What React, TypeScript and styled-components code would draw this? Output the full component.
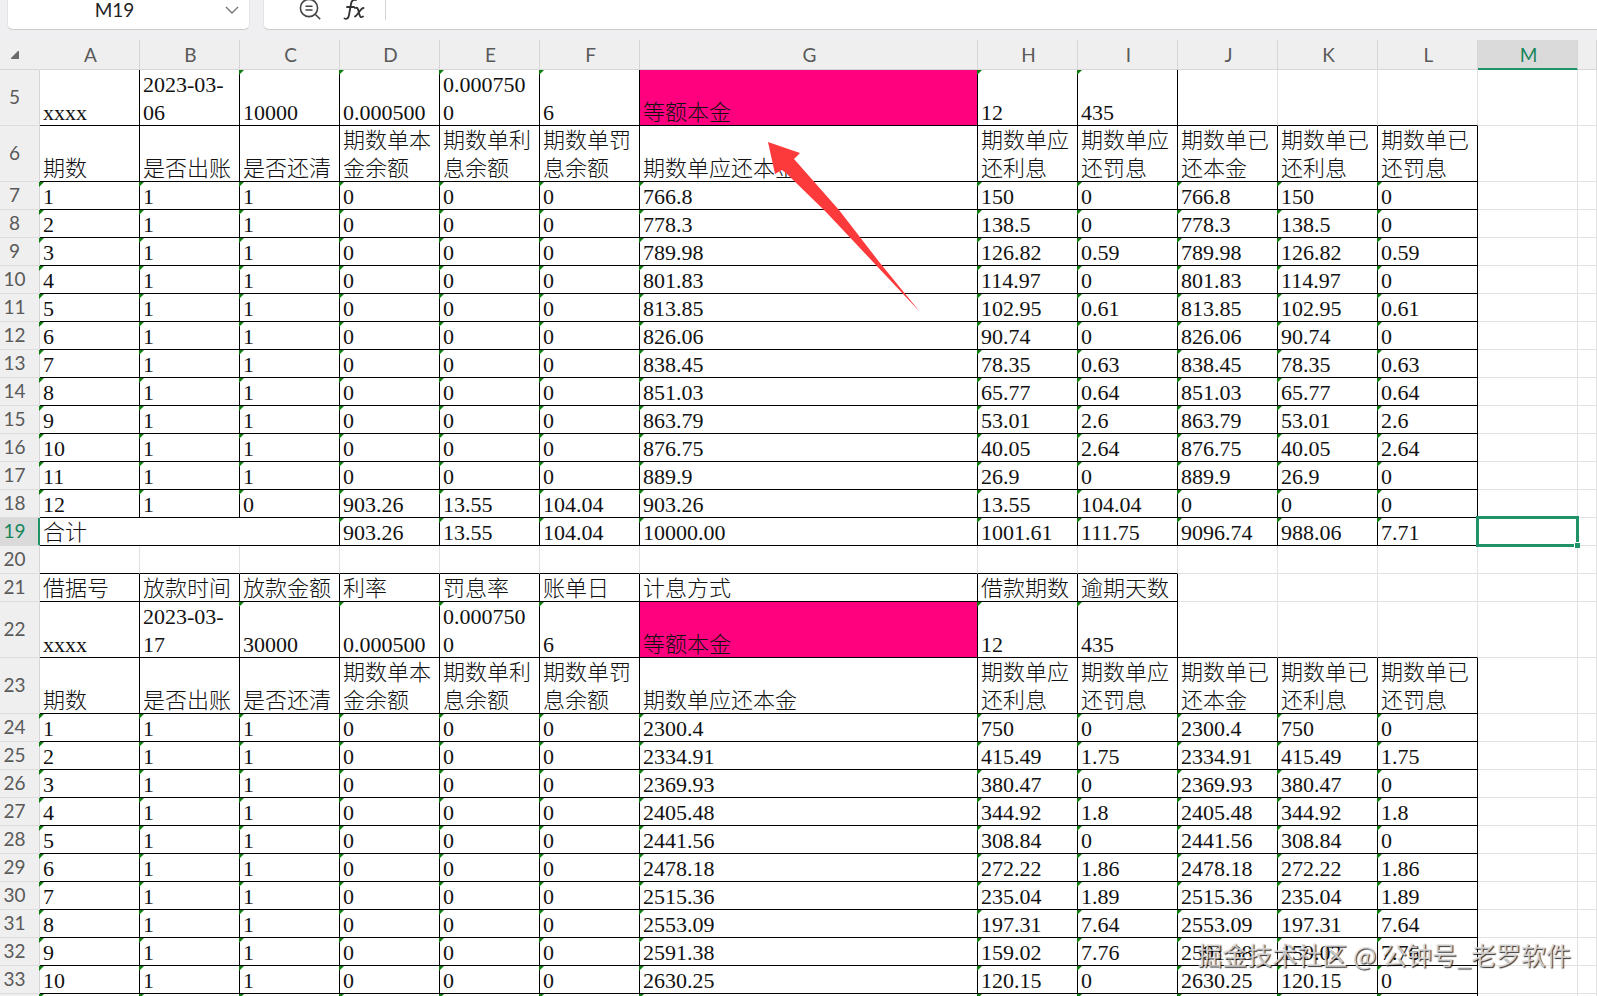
import React from 'react';
import styled, { createGlobalStyle, css } from 'styled-components';

const GlobalStyle = createGlobalStyle`
  *, *::before, *::after { box-sizing: border-box; }
  html, body { margin: 0; height: 100%; overflow: hidden; }
  body { background: #fff; }
`;

const uiFont = css`
  font-family: Lato, 'Noto Sans CJK SC', sans-serif;
  font-size: 19px;
`;

const Page = styled.main`
  position: relative;
  height: 100vh;
  overflow: hidden;
  background: #fff;
`;

const EditBar = styled.header`
  display: flex;
  gap: 13px;
  height: 40px;
  padding-left: 7px;
  padding-bottom: 10px;
  background: #efeff1;
`;

const barBox = css`
  display: flex;
  align-items: center;
  background: #fff;
  border: 1px solid #e3e3e3;
  border-top: 0;
  border-bottom-color: #c9cccc;
`;

const NameBox = styled.div`
  ${barBox}
  width: 243px;
  padding: 0 10px 10px 0;
  border-radius: 0 0 6px 6px;
`;

const NameInput = styled.input`
  ${uiFont}
  flex: 1;
  min-width: 0;
  height: 20px;
  padding: 0 4px 0 0;
  border: 0;
  outline: 0;
  background: transparent;
  color: #222;
  text-align: center;
`;

const FormulaBox = styled.div`
  ${barBox}
  flex: 1;
  gap: 20px;
  padding: 0 0 10px 35px;
  border-right: 0;
  border-radius: 0 0 0 6px;
`;

const IconButton = styled.button`
  display: flex;
  padding: 0;
  border: 0;
  background: none;
  color: #444;
`;

const FormulaInput = styled.input`
  ${uiFont}
  flex: 1;
  height: 20px;
  border: 0;
  border-left: 1px solid #d4d4d4;
  outline: 0;
  background: transparent;
`;

const Sheet = styled.table`
  width: 100%;
  table-layout: fixed;
  border-collapse: separate;
  border-spacing: 0;
`;

const Col = styled.col<{ $w?: number }>`
  width: ${(p) => (p.$w ? `${p.$w}px` : 'auto')};
`;

const headCell = css<{ $active?: boolean }>`
  ${uiFont}
  font-weight: 400;
  padding: 0;
  color: ${(p) => (p.$active ? '#17855c' : '#5a5a5a')};
  background: ${(p) => (p.$active ? '#dadada' : '#efefef')};
`;

const Corner = styled.th`
  ${headCell}
  height: 30px;
  border-bottom: 1px solid #d6d6d6;
  border-right: 1px solid #efefef;
  svg { display: block; margin-left: 10px; }
`;

const ColHead = styled.th<{ $active?: boolean }>`
  ${headCell}
  height: 30px;
  padding-left: 2px;
  line-height: 28px;
  border-right: 1px solid #d6d6d6;
  border-bottom: 1px solid #d6d6d6;
  ${(p) => p.$active && 'box-shadow: inset 0 -1px #1f9268; border-bottom-color: #1f9268;'}
`;

const RowHead = styled.th<{ $active?: boolean }>`
  ${headCell}
  padding-right: 10px;
  padding-bottom: 2px;
  line-height: 24px;
  border-right: 1px solid #d6d6d6;
  border-bottom: 1px solid #dcdcdc;
  ${(p) => p.$active && 'box-shadow: inset -1px 0 #1f9268; border-right-color: #1f9268;'}
`;

const Row = styled.tr<{ $tall?: boolean }>`
  height: ${(p) => (p.$tall ? 56 : 28)}px;
`;

const Cell = styled.td<{ $right?: boolean; $bottom?: boolean; $flag?: boolean; $pink?: boolean }>`
  position: relative;
  padding: 0 0 0 3px;
  vertical-align: bottom;
  background: ${(p) => (p.$pink ? '#ff007f' : '#fff')};
  border-right: 1px solid ${(p) => (p.$right ? '#000' : '#e2e2e2')};
  border-bottom: 1px solid ${(p) => (p.$bottom ? '#000' : '#e2e2e2')};
  ${(p) => p.$flag && css`
    &::before {
      content: '';
      position: absolute;
      top: 0;
      left: -1px;
      width: 5px;
      height: 5px;
      background: #0d7d0d;
      clip-path: polygon(0 0, 100% 0, 0 100%);
    }
  `}
`;

const CellText = styled.div`
  margin-bottom: -2px;
  font-family: 'Liberation Serif', 'Noto Sans CJK SC', serif;
  font-weight: 300;
  font-size: 22px;
  line-height: 28px;
  white-space: pre;
  color: #111;
`;

const Selection = styled.div`
  position: absolute;
  inset: -2px;
  border: 3px solid #1f9268;
  z-index: 1;
  &::after {
    content: '';
    position: absolute;
    right: -4px;
    bottom: -4px;
    width: 6px;
    height: 6px;
    background: #1f9268;
    border-top: 1px solid #fff;
    border-left: 1px solid #fff;
  }
`;

const Arrow = styled.svg`
  position: absolute;
  left: 760px;
  top: 136px;
  z-index: 2;
`;

const Watermark = styled.div`
  position: absolute;
  right: 26px;
  bottom: 24px;
  z-index: 2;
  font-family: 'Noto Sans CJK SC', sans-serif;
  font-size: 25px;
  line-height: 36px;
  white-space: nowrap;
  color: rgba(225, 222, 220, 0.85);
  text-shadow: 1px 1px 1px rgba(0, 0, 0, 0.8);
`;

type Kind = 'titles' | 'loan' | 'heads' | 'data' | 'total' | 'blank';
interface SheetRow { n: number; kind: Kind; cells: string[] }

const TITLES = ['借据号', '放款时间', '放款金额', '利率', '罚息率', '账单日', '计息方式', '借款期数', '逾期天数'];
const HEADS = [
  '期数', '是否出账', '是否还清', '期数单本\n金余额', '期数单利\n息余额', '期数单罚\n息余额', '期数单应还本金',
  '期数单应\n还利息', '期数单应\n还罚息', '期数单已\n还本金', '期数单已\n还利息', '期数单已\n还罚息',
];
const loan = (day: string, amount: string) => [
  'xxxx', `2023-03-\n${day}`, amount, '0.000500', '0.000750\n0', '6', '等额本金', '12', '435',
];
const paid = (i: number, capital: string, interest: string, penalty: string) => [
  String(i), '1', '1', '0', '0', '0', capital, interest, penalty, capital, interest, penalty,
];

const FIRST = [
  ['766.8', '150', '0'], ['778.3', '138.5', '0'], ['789.98', '126.82', '0.59'], ['801.83', '114.97', '0'],
  ['813.85', '102.95', '0.61'], ['826.06', '90.74', '0'], ['838.45', '78.35', '0.63'], ['851.03', '65.77', '0.64'],
  ['863.79', '53.01', '2.6'], ['876.75', '40.05', '2.64'], ['889.9', '26.9', '0'],
];
const SECOND = [
  ['2300.4', '750', '0'], ['2334.91', '415.49', '1.75'], ['2369.93', '380.47', '0'], ['2405.48', '344.92', '1.8'],
  ['2441.56', '308.84', '0'], ['2478.18', '272.22', '1.86'], ['2515.36', '235.04', '1.89'],
  ['2553.09', '197.31', '7.64'], ['2591.38', '159.02', '7.76'], ['2630.25', '120.15', '0'], ['2669.7', '80.7', '0'],
];

const rows: SheetRow[] = [
  { n: 5, kind: 'loan', cells: loan('06', '10000') },
  { n: 6, kind: 'heads', cells: HEADS },
  ...FIRST.map(([a, b, c], i) => ({ n: 7 + i, kind: 'data' as Kind, cells: paid(i + 1, a, b, c) })),
  { n: 18, kind: 'data', cells: ['12', '1', '0', '903.26', '13.55', '104.04', '903.26', '13.55', '104.04', '0', '0', '0'] },
  { n: 19, kind: 'total', cells: ['合计', '', '', '903.26', '13.55', '104.04', '10000.00', '1001.61', '111.75', '9096.74', '988.06', '7.71'] },
  { n: 20, kind: 'blank', cells: [] },
  { n: 21, kind: 'titles', cells: TITLES },
  { n: 22, kind: 'loan', cells: loan('17', '30000') },
  { n: 23, kind: 'heads', cells: HEADS },
  ...SECOND.map(([a, b, c], i) => ({ n: 24 + i, kind: 'data' as Kind, cells: paid(i + 1, a, b, c) })),
];

const LETTERS = 'ABCDEFGHIJKLM'.split('');

// how many columns have a dark right edge and a dark bottom edge
const DARK_EDGES: Record<Kind, [number, number]> = {
  titles: [9, 9],
  loan: [9, 12],
  heads: [12, 12],
  data: [12, 12],
  total: [12, 12],
  blank: [0, 9],
};

// cells that hold a number stored as text carry a green corner
const hasFlag = (kind: Kind, c: number) => {
  if (c > 11) return false;
  if (kind === 'data') return true;
  if (kind === 'total') return c > 2;
  return kind === 'loan' && c > 1 && c < 9 && c !== 6;
};

function SheetLine({ row }: { row: SheetRow }) {
  const [dark, base] = DARK_EDGES[row.kind];
  const active = row.n === 19;
  return (
    <Row $tall={row.kind === 'loan' || row.kind === 'heads'}>
      <RowHead scope="row" $active={active}>{row.n}</RowHead>
      {[...LETTERS, ''].map((_, c) => {
        if (row.kind === 'total' && (c === 1 || c === 2)) return null;
        return (
          <Cell
            key={c}
            colSpan={row.kind === 'total' && c === 0 ? 3 : 1}
            $right={c < dark}
            $bottom={c < base}
            $flag={hasFlag(row.kind, c)}
            $pink={row.kind === 'loan' && c === 6}
          >
            {row.cells[c] && <CellText>{row.cells[c]}</CellText>}
            {active && c === 12 && <Selection />}
          </Cell>
        );
      })}
    </Row>
  );
}

export default function App() {
  return (
    <Page>
      <GlobalStyle />
      <EditBar>
        <NameBox>
          <NameInput aria-label="Name box" defaultValue="M19" />
          <IconButton aria-label="Show names">
            <svg width="14" height="8" viewBox="0 0 14 8" fill="none" stroke="#777" strokeWidth="1.4">
              <path d="M1 1l6 6 6-6" />
            </svg>
          </IconButton>
        </NameBox>
        <FormulaBox>
          <IconButton aria-label="Zoom">
            <svg width="24" height="22" viewBox="0 0 24 22" fill="none" stroke="currentColor" strokeWidth="1.6">
              <circle cx="10" cy="9" r="8.6" />
              <path d="M16.200 15.2l5 5M6.5 7.2h7M6.5 11h7" />
            </svg>
          </IconButton>
          <IconButton aria-label="Insert function">
            <svg width="22" height="24" viewBox="0 0 22 24" fill="none" stroke="#333" strokeWidth="1.8" strokeLinecap="round">
              <path d="M13 2c-3-1-4.500 1-5 4l-2 11c-.5 3-2 4.500-4.500 3.500M4 9h7M12 10c3-1 3 1 4 5s1.500 5 4 3.500M20.500 10c-3 0-6 8-8.500 8.500" />
            </svg>
          </IconButton>
          <FormulaInput aria-label="Formula" />
        </FormulaBox>
      </EditBar>
      <Sheet>
        <colgroup>
          <Col $w={40} />
          {LETTERS.map((l) => <Col key={l} $w={l === 'G' ? 338 : 100} />)}
          <Col />
        </colgroup>
        <thead>
          <tr>
            <Corner aria-label="Select all">
              <svg width="10" height="10" viewBox="0 0 10 10"><path d="M9 1v8H1V8l7-7z" fill="#6a6a6a" /></svg>
            </Corner>
            {LETTERS.map((l) => <ColHead key={l} scope="col" $active={l === 'M'}>{l}</ColHead>)}
            <ColHead />
          </tr>
        </thead>
        <tbody>
          {rows.map((r) => <SheetLine key={r.n} row={r} />)}
        </tbody>
      </Sheet>
      <Arrow width="164" height="178" viewBox="0 0 164 178" aria-hidden="true">
        <path d="M8 6L40 17 34 23 79 74 120 127 160 176 114 127 66 76 27 38 22 34 15 38z" fill="#fc3a3b" />
      </Arrow>
      <Watermark>掘金技术社区 @ 公钟号_老罗软件</Watermark>
    </Page>
  );
}
